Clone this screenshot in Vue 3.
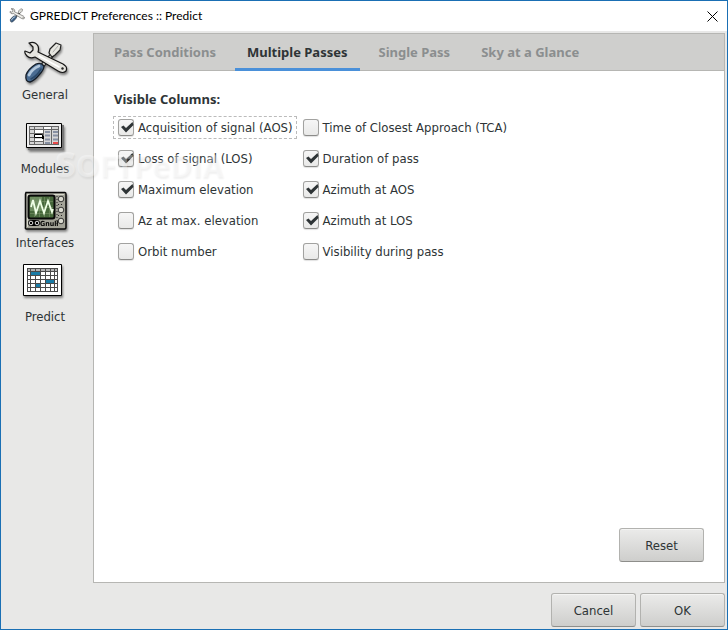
<script setup>
import { ref } from 'vue'

const tabs = ['Pass Conditions', 'Multiple Passes', 'Single Pass', 'Sky at a Glance']
const active = ref('Multiple Passes')

const columns = ref([
  { label: 'Acquisition of signal (AOS)', on: true, focus: true },
  { label: 'Time of Closest Approach (TCA)', on: false },
  { label: 'Loss of signal (LOS)', on: true },
  { label: 'Duration of pass', on: true },
  { label: 'Maximum elevation', on: true },
  { label: 'Azimuth at AOS', on: true },
  { label: 'Az at max. elevation', on: false },
  { label: 'Azimuth at LOS', on: true },
  { label: 'Orbit number', on: false },
  { label: 'Visibility during pass', on: false },
])
</script>

<template>
  <div class="window">
    <header>
      <svg class="logo" viewBox="0 0 46 46">
        <use href="#tools" />
      </svg>
      <h1>GPREDICT Preferences :: Predict</h1>
      <button class="close" aria-label="Close">
        <svg width="11" height="11" viewBox="0 0 11 11"><path d="M.5 .5L10.5 10.5M10.5 .5L.5 10.5" stroke="#000" /></svg>
      </button>
    </header>

    <div class="main">
      <nav>
        <a href="#general">
          <svg class="icon" viewBox="0 0 46 46">
            <g id="tools" stroke-linejoin="round" stroke-linecap="round">
              <!-- screwdriver -->
              <path d="M19 26L31 13" stroke="#222" stroke-width="4.6" />
              <path d="M19 26L31 13" stroke="#c9c9c4" stroke-width="2.4" />
              <path d="M27 12L28 8L34 2L39 4L38 9L33 14L30 16Z" fill="#e6e6e0" stroke="#222" stroke-width="1.2" />
              <path d="M31 11L36 5" stroke="#aaa" />
              <path d="M4 34Q6 28 14 23Q19 21 22 25Q22 29 17 34Q12 40 8 41Q3 41 4 34Z" fill="#4a6c92" stroke="#141c26" stroke-width="1.3" />
              <path d="M7 34Q10 28 17 25" fill="none" stroke="#b3c8dc" stroke-width="2.8" />
              <path d="M9 38Q15 35 19 28" fill="none" stroke="#2b4868" stroke-width="1.6" />
              <!-- wrench -->
              <path d="M7 2Q13 0 16 5Q17 8 16 11L41 23Q46 26 44 30Q41 33 36 30L13 16Q8 18 5 15Q2 12 3 10L8 12L11 9L11 6Z" fill="#e5e4df" stroke="#161616" stroke-width="1.2" />
              <path d="M17 15L37 26" stroke="#fff" stroke-width="1.6" />
              <circle cx="40.5" cy="27.5" r="1.2" fill="#222" />
            </g>
          </svg>
          <span>General</span>
        </a>
        <a href="#modules">
          <svg class="icon" viewBox="0 0 46 46">
            <rect x="6" y="10" width="36" height="25" fill="#777" />
            <path d="M4.5 8.5h35v24h-35z" fill="#eee" stroke="#000" />
            <path d="M7 11h30v19H7z" fill="#d6d6d6" />
            <path d="M7 14.5h30M7 18.5h14M7 22.5h14M7 26.5h14M7.5 11v19M12.5 11v19M21.5 11v19M29.5 11v19M36.5 11v19M7 11.5h30M7 29.5h30" stroke="#666" />
            <path d="M13 15h8v3h-8zM22 12h7v2h-7zM13 24h8v2h-8z" fill="#fff" />
            <path d="M23 17h5M31 17h5M23 20.5h5M31 20.5h5M23 24.5h5M31 24.5h5M23 28h5" stroke="#8790a3" stroke-width="2" />
            <path d="M31 28h5" stroke="#e94b4b" stroke-width="2" />
            <path d="M12.5 19.5h8v3h-8z" fill="#fff" stroke="#000" />
            <path d="M20 21h2v3h-2z" />
          </svg>
          <span>Modules</span>
        </a>
        <a href="#interfaces">
          <svg class="icon" viewBox="0 0 46 46">
            <path d="M4 3.5h39q1 0 1 2v33q0 1.500-1.500 1.500H4.500Q3 40 3.500 38V5Z" fill="#a3a398" stroke="#080808" stroke-width="1.5" />
            <path d="M5 5.5h37M5.500 6v32" stroke="#d7d7ca" />
            <rect x="6.5" y="6.5" width="26" height="23" rx="2" fill="#46683b" stroke="#080808" stroke-width="2" />
            <path d="M8 8h12v14H8z" fill="#86a578" opacity=".6" />
            <path d="M12.5 8v20M17.5 8v20M22.5 8v20M27.5 8v20M8 12.5h23M8 18.5h23M8 24.5h23" stroke="#789268" stroke-width=".6" />
            <path d="M9 18l2-7 3 13 4-12 4 12 4-12 4 11 1-3" fill="none" stroke="#efffe6" stroke-width="1.8" />
            <g stroke="#333" fill="#d9d9cf">
              <circle cx="39" cy="10" r="2.8" />
              <circle cx="39" cy="21" r="2.8" />
              <circle cx="39" cy="32" r="2.8" />
            </g>
            <path d="M35 7v28M36 15.500h6M36 26.500h6" stroke="#222" stroke-dasharray="1 2" />
            <rect x="6" y="31" width="12" height="6" rx="3" />
            <circle cx="9" cy="34" r="1.8" fill="none" stroke="#ddd" />
            <circle cx="15" cy="34" r="1.8" fill="none" stroke="#ddd" />
            <text x="18" y="37" font-size="7" font-weight="bold">Gnull</text>
          </svg>
          <span>Interfaces</span>
        </a>
        <a href="#predict">
          <svg class="icon" viewBox="0 0 46 46">
            <path d="M1.5 1.5h38v31h-38z" fill="#fff" stroke="#000" />
            <path d="M5 5h31v4H5z" fill="#b5b5b5" />
            <path d="M9 9h9v4H9zM23 17h10v4H23zM13 21h5v4h-5z" fill="#197ba6" />
            <path d="M5.5 5v23M8.5 5v23M13.5 5v23M18.5 5v23M23.5 5v23M28.5 5v23M32.5 5v23M35.5 5v23M5 5.5h31M5 8.5h31M5 12.5h31M5 16.5h31M5 20.5h31M5 24.5h31M5 28.5h31" stroke="#4a4a4a" />
            <path d="M9 9h9v3H9zM24 17h8v3h-8zM14 21h4v3h-4z" fill="#197ba6" />
          </svg>
          <span>Predict</span>
        </a>
      </nav>

      <div class="notebook">
        <div class="tabs" role="tablist">
          <button
            v-for="t in tabs"
            :key="t"
            role="tab"
            :aria-selected="t === active"
            :class="{ active: t === active }"
            @click="active = t"
          >{{ t }}</button>
        </div>
        <div class="page">
          <h2>Visible Columns:</h2>
          <div class="columns">
            <label v-for="c in columns" :key="c.label" :class="{ focus: c.focus }">
              <span class="check">
                <input v-model="c.on" type="checkbox">
                <svg v-if="c.on" viewBox="0 0 16 17"><path d="M3 8L5.5 6.5L8 9L14.5 3L15.5 6L8 13.500Z" fill="#2e3436" /></svg>
              </span>
              {{ c.label }}
            </label>
          </div>
          <button class="btn reset">Reset</button>
        </div>
      </div>
    </div>

    <footer>
      <button class="btn">Cancel</button>
      <button class="btn">OK</button>
    </footer>

    <div class="watermark"><b>S</b>OFTPeDIA</div>
  </div>
</template>

<style>
body {
  margin: 0;
}
</style>

<style scoped>
.window {
  position: relative;
  display: flex;
  flex-direction: column;
  box-sizing: border-box;
  min-height: 100vh;
  border: 1px solid #1a6fb4;
  background: #e8e8e7;
  color: #2e3436;
  font: 13px/16px "DejaVu Sans Condensed", "DejaVu Sans", sans-serif;
}

header {
  display: flex;
  align-items: center;
  height: 30px;
  padding: 0 9px 0 8px;
  background: #fff;
}

.logo {
  width: 16px;
  height: 16px;
}

h1 {
  flex: 1;
  margin: 0 0 0 5px;
  color: #000;
  font: 12px/16px Lato, sans-serif;
}

button {
  font: inherit;
  color: inherit;
}

.close {
  display: flex;
  padding: 0;
  border: 0;
  background: none;
}

.main {
  flex: 1;
  display: flex;
  padding: 2px 2px 0 0;
}

nav {
  box-sizing: border-box;
  width: 92px;
  padding: 8px 4px 0 0;
}

nav a {
  display: flex;
  flex-direction: column;
  align-items: center;
  height: 74px;
  color: inherit;
  text-decoration: none;
}

.icon {
  width: 46px;
  height: 46px;
  filter: drop-shadow(1px 2px 1px rgba(0, 0, 0, 0.45));
}

.notebook {
  flex: 1;
  display: flex;
  flex-direction: column;
  border: 1px solid #b6b6b3;
  background: #fff;
}

.tabs {
  display: flex;
  gap: 7px;
  height: 36px;
  padding: 0 8px;
  border-bottom: 1px solid #b6b6b3;
  background: #cfcfcd;
}

.tabs button {
  margin-bottom: -1px;
  padding: 1px 12px 0;
  border: 0;
  border-bottom: 3px solid transparent;
  background: none;
  color: #8b8e8f;
  font: bold 13px/16px "Noto Sans", sans-serif;
}

.tabs .active {
  border-color: #4a90d9;
  color: #2e3436;
}

.page {
  flex: 1;
  display: flex;
  flex-direction: column;
  padding: 20px 20px 20px 19px;
}

h2 {
  margin: 0 0 9px 1px;
  font: bold 13px/16px "Noto Sans", sans-serif;
}

.columns {
  display: grid;
  grid-template-columns: max-content max-content;
  justify-items: start;
  gap: 8px 1px;
}

label {
  display: flex;
  align-items: center;
  gap: 4px;
  box-sizing: border-box;
  height: 23px;
  padding: 0 3px 0 4px;
  border: 1px dashed transparent;
}

label.focus {
  border-color: #bbb;
}

.check {
  position: relative;
  display: flex;
}

.check svg {
  position: absolute;
  inset: 0;
  pointer-events: none;
}

input {
  appearance: none;
  box-sizing: border-box;
  width: 16px;
  height: 17px;
  margin: 0;
  border: 1px solid #a2a2a0;
  border-bottom-color: #8b8b89;
  border-radius: 3px;
  background: linear-gradient(#f6f6f6, #e9e9e8);
  box-shadow: 0 1px 1px rgba(0, 0, 0, 0.12);
}

.btn {
  width: 85px;
  height: 34px;
  padding: 2px 0 0;
  border: 1px solid #b2b2af;
  border-bottom-color: #8e8e8b;
  border-radius: 3px;
  background: linear-gradient(#ebebea, #cececc);
  box-shadow: inset 0 1px #f4f4f3;
}

.reset {
  align-self: flex-end;
  margin-top: auto;
}

footer {
  display: flex;
  justify-content: flex-end;
  gap: 4px;
  padding: 10px 2px 2px;
}

.watermark {
  position: absolute;
  top: 145px;
  left: 54px;
  color: rgba(255, 255, 255, 0.35);
  font: bold 30px/36px "Open Sans", sans-serif;
  text-shadow: 1px 2px 2px rgba(0, 0, 0, 0.06);
  pointer-events: none;
}

.watermark b {
  font-size: 36px;
}
</style>
